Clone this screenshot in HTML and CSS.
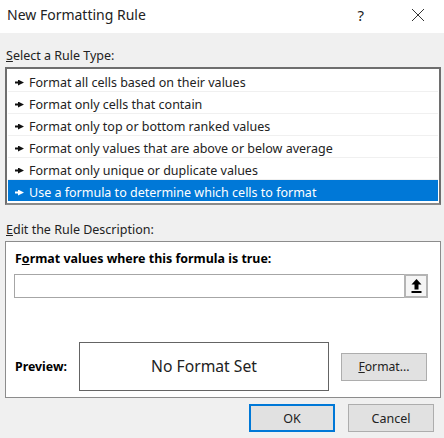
FILE: index.html
```html
<!DOCTYPE html>
<html lang="en">
<head>
    <meta charset="UTF-8">
    <title>New Formatting Rule</title>
    <link rel="stylesheet" href="styles.css">
</head>
<body>
    <div class="dialog">
        <div class="title-bar">
            <span class="title">New Formatting Rule</span>
            <span class="help">?</span>
            <svg class="close" width="14" height="14" viewBox="0 0 14 14">
                <path d="M1 1 L13 13 M13 1 L1 13" stroke="#333" stroke-width="1" fill="none"/>
            </svg>
        </div>

        <div class="content">
            <div class="section-label"><u>S</u>elect a Rule Type:</div>
            <ul class="rule-list">
                <li><span class="arrow"></span>Format all cells based on their values</li>
                <li><span class="arrow"></span>Format only cells that contain</li>
                <li><span class="arrow"></span>Format only top or bottom ranked values</li>
                <li><span class="arrow"></span>Format only values that are above or below average</li>
                <li><span class="arrow"></span>Format only unique or duplicate values</li>
                <li class="selected"><span class="arrow"></span>Use a formula to determine which cells to format</li>
            </ul>

            <div class="section-label edit-label"><u>E</u>dit the Rule Description:</div>
            <div class="edit-box">
                <div class="formula-label">F<u>o</u>rmat values where this formula is true:</div>
                <div class="formula-input">
                    <button class="pick-btn">
                        <svg width="11" height="14" viewBox="0 0 11 14">
                            <path d="M5.5 0 L10.5 5.5 L7.5 5.5 L7.5 10.5 L3.5 10.5 L3.5 5.5 L0.5 5.5 Z" fill="#000"/>
                            <rect x="0.5" y="12" width="10" height="2" fill="#000"/>
                        </svg>
                    </button>
                </div>
                <div class="preview-row">
                    <span class="preview-label">Preview:</span>
                    <div class="preview-box">No Format Set</div>
                    <button class="btn format-btn"><u>F</u>ormat...</button>
                </div>
            </div>

            <div class="actions">
                <button class="btn ok-btn">OK</button>
                <button class="btn cancel-btn">Cancel</button>
            </div>
        </div>
    </div>
</body>
</html>
```

FILE: styles.css
```css
body {
    margin: 0;
    font-family: "Noto Sans", "Open Sans", sans-serif;
    font-size: 12.5px;
    color: #222;
}

.dialog {
    width: 444px;
    height: 438px;
    background-color: #f0f0f0;
    overflow: hidden;
}

.title-bar {
    height: 33px;
    box-sizing: border-box;
    padding: 0 0 4px 7px;
    background-color: #fff;
    display: flex;
    align-items: center;
}

.title {
    font-size: 14px;
    flex: 1;
}

.help {
    font-size: 15px;
    margin-right: 47px;
}

.close {
    margin-right: 19px;
}

.content {
    padding: 14px 3px 0 5px;
}

.section-label {
    height: 20px;
    line-height: 18px;
    padding-left: 1px;
}

.rule-list {
    list-style: none;
    margin: 0;
    padding: 1px 1px 2px;
    width: 430px;
    height: 131px;
    background-color: #fff;
    border: 2px solid #6e6e6e;
    border-bottom-color: #8a8a8a;
}

.rule-list li {
    height: 22px;
    padding: 4px 0 0 7px;
    display: flex;
    align-items: center;
    border-bottom: 1px solid #f0f0f0;
    box-sizing: border-box;
}

.rule-list li.selected {
    height: 21px;
    background-color: #0078d7;
    color: #fff;
    border-bottom: 0;
}

.arrow {
    width: 9px;
    height: 6px;
    margin-right: 5px;
    background-color: #111;
    clip-path: polygon(0 2px, 3px 2px, 3px 0, 9px 3px, 3px 6px, 3px 4px, 0 4px);
}

.selected .arrow {
    background-color: #fff;
}

.edit-label {
    margin-top: 16px;
}

.edit-box {
    width: 414px;
    height: 155px;
    background-color: #fff;
    border: 1px solid #8c8c8c;
    padding: 0 12px 0 8px;
}

.formula-label {
    font-size: 12.45px;
    font-weight: bold;
    margin-top: 8px;
    padding-left: 1px;
    height: 24px;
    line-height: 18px;
    color: #000;
}

.formula-input {
    height: 22px;
    border: 1px solid #a6a6a6;
    display: flex;
    justify-content: flex-end;
}

.pick-btn {
    width: 24px;
    height: 24px;
    margin: -1px -1px 0 0;
    background-color: #f5f5f5;
    border: 2px solid #b4b4b4;
    padding: 0;
    display: flex;
    align-items: center;
    justify-content: center;
}

.preview-row {
    display: flex;
    align-items: center;
    margin-top: 44px;
}

.preview-label {
    font-size: 12.35px;
    font-weight: bold;
    box-sizing: border-box;
    width: 65px;
    padding-left: 1px;
    color: #000;
}

.preview-box {
    width: 248px;
    height: 47px;
    line-height: 47px;
    text-align: center;
    font-size: 15.7px;
    border: 1px solid #646464;
}

.btn {
    font-family: inherit;
    font-size: 12.5px;
    color: #222;
    background-color: #e1e1e1;
    border: 1px solid #adadad;
    padding: 0;
}

.format-btn {
    width: 86px;
    height: 28px;
    margin-left: 12px;
    font-size: 12.2px;
}

.actions {
    display: flex;
    justify-content: flex-end;
    gap: 13px;
    margin-top: 6px;
    padding-right: 7px;
}

.ok-btn {
    width: 86px;
    height: 28px;
    border: 2px solid #0078d7;
}

.cancel-btn {
    width: 86px;
    height: 28px;
}
```
